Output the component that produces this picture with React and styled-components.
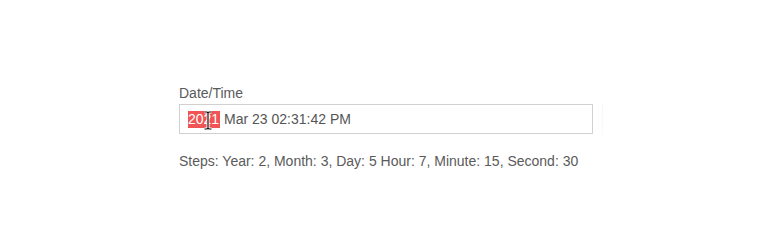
import React from "react"
import styled, { createGlobalStyle } from "styled-components"

const GlobalStyle = createGlobalStyle`
  html, body {
    margin: 0;
    padding: 0;
    background: #fff;
  }
  body {
    font-family: "Liberation Sans", Arial, sans-serif;
    color: #555;
  }
`

const Page = styled.div`
  width: 770px;
  height: 250px;
  padding: 85px 0 0 179px;
  box-sizing: border-box;
`

const Field = styled.div`
  width: 424px;
  display: flex;
  flex-direction: column;
`

const Label = styled.label`
  font-size: 14px;
  line-height: 16px;
  color: #5a5a5a;
  margin-bottom: 3px;
`

const InputRow = styled.div`
  display: flex;
  align-items: stretch;
  gap: 9px;
`

const InputBox = styled.div`
  position: relative;
  flex: 1;
  height: 30px;
  box-sizing: border-box;
  border: 1px solid #d0d0d0;
  display: flex;
  align-items: center;
  padding-left: 8px;
  font-size: 14px;
  color: #555;
  white-space: pre;
`

const Selected = styled.span`
  background: #f05454;
  color: #fff;
  padding: 1px 1px 1px 0;
  line-height: 15px;
`

const Ghost = styled.div`
  width: 0;
  border-left: 1px dotted #f2f2f2;
`

const Cursor = styled.svg`
  position: absolute;
  left: 23px;
  top: 6px;
`

const Steps = styled.div`
  margin-top: 19px;
  font-size: 14px;
  color: #5a5a5a;
`

const beam = "M1.5 1h2.5l1 1 1-1h2.5M5 2v15M1.5 18h2.5l1-1 1 1h2.5"

export default function App() {
  return (
    <Page>
      <GlobalStyle />
      <Field>
        <Label>Date/Time</Label>
        <InputRow>
          <InputBox>
            <Selected>2021</Selected>{" Mar 23 02:31:42 PM"}
            <Cursor width="10" height="19" viewBox="0 0 10 19">
              <path d={beam} fill="none" stroke="#fff" strokeWidth="3" />
              <path d={beam} fill="none" stroke="#111" strokeWidth="1.2" />
            </Cursor>
          </InputBox>
          <Ghost />
        </InputRow>
        <Steps>Steps: Year: 2, Month: 3, Day: 5 Hour: 7, Minute: 15, Second: 30</Steps>
      </Field>
    </Page>
  )
}
